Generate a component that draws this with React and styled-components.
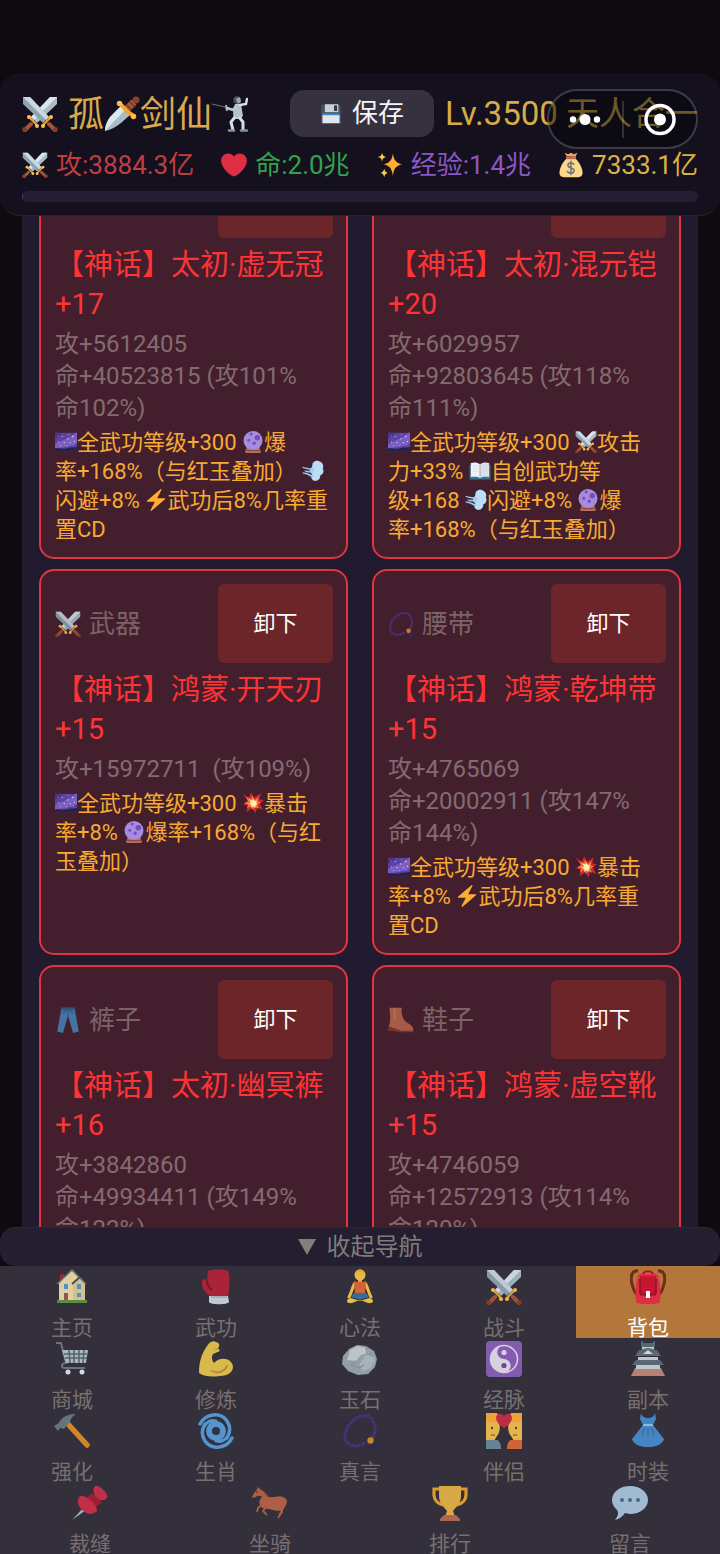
import { useLayoutEffect, useRef } from "react";
import styled, { createGlobalStyle, ThemeProvider } from "styled-components";

const theme = {
  bgColor: "#0d0a10",
  headerColor: "#15101e",
  panelColor: "#201b2f",
  cardColor: "#431f2e",
  mythic: "#ff3334",
  cardBorder: "#e2343f",
  gold: "#d8a94e",
  muted: "#846b70",
  effect: "#f8aa31",
};

const GlobalStyle = createGlobalStyle`
  * {
    box-sizing: border-box;
  }
  body {
    margin: 0;
    background-color: ${(props) => props.theme.bgColor};
    font-family: Roboto, "Noto Sans CJK SC", sans-serif;
    font-weight: 400;
  }
  button {
    font-family: inherit;
    border: none;
    padding: 0;
    cursor: pointer;
  }
`;

/* ---------- icons ---------- */

const Svg = styled.svg`
  width: ${(props) => props.$size || "1em"};
  height: ${(props) => props.$size || "1em"};
  flex: none;
  vertical-align: -0.15em;
`;

const drawings = {
  "⚔": (
    <>
      <path d="M35 1v7L15 27l-6-6L28 1z" fill="#a9bcc8" />
      <path d="M35 1 12 24l-3-3L28 1z" fill="#dbe5ec" />
      <path d="M1 1v7l20 19 6-6L8 1z" fill="#8ea4b2" />
      <path d="M1 1l23 23 3-3L8 1z" fill="#ccd8e0" />
      <path d="M9 28l-6 6M27 28l6 6" stroke="#a2573d" strokeWidth="4" strokeLinecap="round" />
      <path d="M7 21l8 8M29 21l-8 8" stroke="#f3a434" strokeWidth="2.200" strokeLinecap="round" />
      <g fill="#ffc14e">
        <circle cx="7" cy="21" r="2" />
        <circle cx="15" cy="30" r="2" />
        <circle cx="29" cy="21" r="2" />
        <circle cx="21" cy="30" r="2" />
      </g>
      <circle cx="2.600" cy="33.400" r="2.400" fill="#8a3c2b" />
      <circle cx="33.400" cy="33.400" r="2.400" fill="#8a3c2b" />
    </>
  ),
  "🗡": (
    <>
      <path d="M1 35c0-6 3-12 7-16l9-9 9 9-9 8C12 31 6 34 1 35z" fill="#a9bcc8" />
      <path d="M1 35c0-6 3-12 7-16l9-9 4 4z" fill="#dbe7ee" />
      <path d="M22 14l8-8" stroke="#a9573b" strokeWidth="7" />
      <path d="M23 9l5 5M26 6l5 5" stroke="#6f3528" strokeWidth="1.500" />
      <path d="M15 7c3 3 4 3 6 6s6 5 9 7" stroke="#f7a42f" strokeWidth="4" strokeLinecap="round" fill="none" />
      <circle cx="15.500" cy="7.500" r="2.700" fill="#ffbd48" />
      <circle cx="29.500" cy="20.500" r="2.700" fill="#ffbd48" />
      <circle cx="32" cy="4" r="3.500" fill="#8b402d" />
    </>
  ),
  "🤺": (
    <>
      <path d="M0 8l17 4" stroke="#67757f" strokeWidth="1" />
      <path d="M14 9l1 6" stroke="#9aa9b3" strokeWidth="2" />
      <circle cx="25" cy="4" r="3.700" fill="#4b565e" />
      <path d="M24 3l4-2 1 5-3 2z" fill="#99aab5" />
      <path d="M23 8h6l2 12-3 3h-6l-1-6z" fill="#b4c3cd" />
      <path d="M24 10l-3 4-6-2" stroke="#b9c8d2" strokeWidth="2.600" fill="none" strokeLinecap="round" />
      <path d="M28 9l6-1 1-5" stroke="#d5e0e7" strokeWidth="2.400" fill="none" strokeLinecap="round" />
      <path d="M23 21l-4 5 2 8M27 21l4 5v8" stroke="#d6dfe6" strokeWidth="3" fill="none" />
      <path d="M17 34.500h5M29 34.500h6" stroke="#8296a2" strokeWidth="2.500" strokeLinecap="round" />
    </>
  ),
  "💾": (
    <>
      <path d="M3 3h28l3 3v28H2V4z" fill="#47525a" />
      <path d="M8 2h22v13H8z" fill="#c6d2da" />
      <path d="M23 4h5v9h-5z" fill="#2e383e" />
      <path d="M4 17h28v4H4z" fill="#3c87cb" />
      <path d="M4 20h28v13H4z" fill="#e1e8ed" />
    </>
  ),
  "❤": (
    <path
      d="M35.885 11.833c0-5.450-4.418-9.868-9.867-9.868-3.308 0-6.227 1.633-8.018 4.129-1.791-2.496-4.710-4.129-8.017-4.129C4.533 1.965.115 6.382.115 11.833c0 .772.098 1.520.266 2.241C1.751 22.587 11.216 31.568 18 34.034c6.783-2.466 16.249-11.447 17.617-19.959.170-.721.268-1.469.268-2.242z"
      fill="#dd2e44"
    />
  ),
  "✨": (
    <>
      <path d="M22 2c1.500 9 4 13 13 15-9 2-11.500 6-13 16-1.500-10-4-14-13-16 9-2 11.500-6 13-15z" fill="#ffac33" />
      <path d="M7 1c.800 4 2 5.300 6 6-4 .800-5.200 2-6 6-.800-4-2-5.200-6-6 4-.700 5.200-2 6-6zM10 23c.800 4 2 5.300 5 6-3 .800-4.200 2-5 6-.800-4-2-5.200-5-6 3-.700 4.200-2 5-6z" fill="#ffcc4d" />
    </>
  ),
  "💰": (
    <>
      <path d="M12 6L9 1l5 2 4-2 4 2 5-2-3 6z" fill="#f0a65a" />
      <path d="M12 9h12c6 5 10 14 10 20 0 4-3 6-7 6H9c-4 0-7-2-7-6C2 23 6 14 12 9z" fill="#fdd888" />
      <path d="M11 6h14v4H11z" fill="#bf6952" />
      <path d="M22 17c-1-2-7-3-8 0s1 4 4 5 5 2 4 5-7 3-9 0M18 13v18" stroke="#67757f" strokeWidth="2.200" fill="none" strokeLinecap="round" />
    </>
  ),
  "🌌": (
    <>
      <path d="M0 3h36v30H0z" fill="#5b43a4" />
      <path d="M0 22C8 16 20 14 34 3h2v17C24 26 12 27 0 28z" fill="#7a5fc0" />
      <path d="M0 3h12C8 8 5 11 0 13z" fill="#46348a" />
      <path d="M0 29c9-2 14 2 21-1 6-2 10-1 15-2v7H0z" fill="#252346" />
      <g fill="#e5d9ff">
        <circle cx="6" cy="18" r="1" />
        <circle cx="12" cy="9" r="1" />
        <circle cx="15" cy="19" r="1.200" />
        <circle cx="21" cy="13" r="1" />
        <circle cx="25" cy="19" r="1" />
        <circle cx="29" cy="9" r="1.200" />
        <circle cx="32" cy="17" r="1" />
        <circle cx="22" cy="6" r=".8" />
        <circle cx="9" cy="24" r=".8" />
        <circle cx="19" cy="24" r=".8" />
        <circle cx="5" cy="8" r=".8" />
        <circle cx="30" cy="23" r=".8" />
      </g>
    </>
  ),
  "🔮": (
    <>
      <path d="M8 27h20l3 7c0 1-1 2-2 2H7c-1 0-2-1-2-2z" fill="#b8715f" />
      <circle cx="18" cy="15.500" r="15.500" fill="#a78be0" />
      <path d="M7 31h22v2H7z" fill="#8a4b3d" />
      <circle cx="15" cy="5" r="2.500" fill="#7450b4" />
      <circle cx="25" cy="11" r="4.500" fill="#7450b4" />
      <circle cx="20" cy="20" r="2.800" fill="#7450b4" />
      <circle cx="11" cy="15" r="2.500" fill="#7450b4" />
    </>
  ),
  "💨": (
    <>
      <path d="M17 10c-1-7 6-10 11-8 6 2 8 7 6 12 3 5 0 10-4 11 0 7-5 10-10 9-5-2-6-7-3-11-4-1-5-5-3-8z" fill="#bbddf5" />
      <path d="M1 11c7 2 12 2 19 3v4L1 13zM3 17l15 1 1 3-12-1zM1 20c7 1 12 2 18 6l-2 3C11 24 6 23 1 22z" fill="#9dcbee" />
    </>
  ),
  "⚡": (
    <path
      d="M32.938 15.651C32.792 15.260 32.418 15 32 15H19.925L26.890 1.458c.219-.426.106-.947-.271-1.243C26.437.071 26.218 0 26 0c-.233 0-.466.082-.653.243L18 6.588 3.347 19.243c-.316.273-.430.714-.284 1.105S3.582 21 4 21h12.075L9.110 34.542c-.219.426-.106.947.271 1.243.182.144.401.215.619.215.233 0 .466-.082.653-.243L18 29.412l14.653-12.655c.317-.273.430-.714.285-1.106z"
      fill="#ffac33"
    />
  ),
  "📖": (
    <>
      <path d="M1 8h34v24H1z" fill="#3a6f8e" />
      <path d="M3 5c6-2 11-1 15 2v23c-4-3-9-3-15-2z" fill="#f0f3f5" />
      <path d="M33 5c-6-2-11-1-15 2v23c4-3 9-3 15-2z" fill="#dbe2e7" />
      <path d="M18 7v23" stroke="#99aab5" strokeWidth="1.500" />
      <path d="M6 10h9M6 14h9M6 18h9M21 10h9M21 14h9M21 18h9" stroke="#ccd6dd" strokeWidth="1" />
    </>
  ),
  "💥": (
    <>
      <path d="M1 3l10 6 4-8 5 8 11-7-3 10 8 2-7 5 6 11-10-5-3 10-5-9-10 7 3-10-9-3 9-5z" fill="#cf2632" />
      <path d="M7 8l7 4 3-6 3 7 8-5-3 7 6 2-6 4 3 7-7-4-3 6-3-7-7 4 2-6-6-3 6-3z" fill="#f4793a" />
      <path d="M12 12l5 2 2-3 2 4 4-1-2 4 2 2-3 2 0 4-4-3-3 3v-5l-4-2 4-2z" fill="#fff0b6" />
    </>
  ),
  "📿": (
    <>
      <path
        d="M31 24C35 16 33 5 25 3 15 1 3 12 3 23c0 12 14 12 21 6"
        stroke="#553788"
        strokeWidth="3.400"
        strokeDasharray=".1 3.800"
        strokeLinecap="round"
        fill="none"
      />
      <path d="M31 24C35 16 33 5 25 3 15 1 3 12 3 23c0 12 14 12 21 6" stroke="#44307c" strokeWidth="1.600" fill="none" />
      <path d="M30 29l5 1v6h-7z" fill="#2f294d" />
      <circle cx="28.500" cy="27.500" r="3.200" fill="#dc8a2f" />
    </>
  ),
  "👖": (
    <>
      <path d="M9 1h18l6 33-8 2-7-24-7 24-8-2z" fill="#4481b8" />
      <path d="M9 1h18v4H9z" fill="#2d5e88" />
      <path d="M18 4v9M10 8c4 0 5-2 5-4M26 8c-4 0-5-2-5-4" stroke="#2d5e88" strokeWidth="1.400" fill="none" />
    </>
  ),
  "👢": (
    <>
      <path d="M2 1h17c-1 8 1 13 4 18 4 4 12 6 12 12v3H20L1 27c3-8 2-17 1-26z" fill="#b9664b" />
      <path d="M0 28c6 0 12 3 18 5h17v2H17C12 34 7 33 0 33z" fill="#7c3a2c" />
      <path d="M9 2v16" stroke="#c98263" strokeWidth="2" />
    </>
  ),
  "🏠": (
    <>
      <path d="M6 5h4v8H6z" fill="#a32536" />
      <path d="M5 14L18 1l13 13v18H5z" fill="#efdcae" />
      <path d="M19 13l6-6 6 7v18H19z" fill="#e3cc98" />
      <path d="M3 15L18 1l14 14" stroke="#6b776f" strokeWidth="1.600" fill="none" />
      <path d="M18 15l8-7" stroke="#4e5458" strokeWidth="2" />
      <path d="M10 15h4v5h-4zM23 15h4v5h-4zM23 24h4v4h-4z" fill="#519bd6" />
      <path d="M10 24h4v8h-4z" fill="#a65345" />
      <path d="M3 31h30v3H3z" fill="#5f9345" />
    </>
  ),
  "🥊": (
    <>
      <path d="M11 27h19l1 6c-1 3-19 3-20 0z" fill="#ccd6dd" />
      <path d="M10 2c4-2 15-2 20 0 2 3 2 16 0 25H12C6 23 3 17 4 12c1-2 3-2 5-1z" fill="#b32439" />
      <path d="M9 11c0 5 2 8 5 10" stroke="#7c172a" strokeWidth="2" fill="none" />
      <path d="M13 28h16" stroke="#9daeb9" strokeWidth="1.300" />
    </>
  ),
  "🧘": (
    <>
      <path d="M16 9h4v5h-4z" fill="#e5ac38" />
      <circle cx="18" cy="6" r="5.500" fill="#f5c84d" />
      <path d="M13 4c2-5 8-5 10 0-3-1-7-1-10 0z" fill="#fbb030" />
      <path d="M13 14c-3 4-3 9-6 14M23 14c3 4 3 9 6 14" stroke="#f5c84d" strokeWidth="3" fill="none" strokeLinecap="round" />
      <path d="M12 13h12l-1 12H13z" fill="#e2683a" />
      <path d="M12 24h12l3 4-9 3-9-3z" fill="#38729b" />
      <path d="M9 29c-6 1-5 6 1 5l8-3 8 3c6 1 7-4 1-5l-9 3z" fill="#f5c84d" />
    </>
  ),
  "🎒": (
    <>
      <path d="M8 2C2 1 0 7 2 15s4 11 9 11M28 2c6-1 8 5 6 13s-4 11-9 11" stroke="#762a19" strokeWidth="3" fill="none" />
      <path d="M13 6c0-5 10-5 10 0" stroke="#b3122b" strokeWidth="2" fill="none" />
      <path d="M10 5h16c4 2 5 15 4 28-1 3-23 3-24 0C5 20 6 7 10 5z" fill="#dd2e44" />
      <path d="M10 7h16v20H10z" fill="#c41632" />
      <path d="M10 10v14c0 2 16 2 16 0V10" stroke="#8f1128" strokeWidth="1.500" fill="none" />
      <path d="M16 22h4v7h-4z" fill="#fff" />
    </>
  ),
  "🛒": (
    <>
      <path d="M2 2h5l5 20c-4 0-6 4-2 5h21" stroke="#6d7a84" strokeWidth="2" fill="none" />
      <path d="M8 9h26l-2 13H12z" fill="#b4c3cc" />
      <path d="M10 13h23M11 17h22M15 9l1 13M20 9v13M25 9v13M30 9l-1 13" stroke="#59666f" strokeWidth="1.500" />
      <circle cx="14" cy="31" r="2.500" fill="#e1e8ed" />
      <circle cx="28" cy="31" r="2.500" fill="#e1e8ed" />
    </>
  ),
  "💪": (
    <>
      <path d="M9 5c2-4 7-6 9-4 4 1 4 4 2 6l2 3-7 3c-2 3-1 6 1 9 4-5 13-6 17-1 5 6 0 14-11 14-8 1-15 1-21-3C1 20 4 12 9 5z" fill="#e8c54c" />
      <path d="M14 30c6 3 12 1 15-5" stroke="#c58e39" strokeWidth="1.800" fill="none" strokeLinecap="round" />
      <path d="M17 8l3 0" stroke="#d79d3c" strokeWidth="1.500" fill="none" />
    </>
  ),
  "🪨": (
    <>
      <path d="M7 8l8-4 9 1 8 5 3 8-2 8-7 7-10 1-10-4-6-7 1-8z" fill="#9ba9af" />
      <path d="M8 9l8-4 8 2 3 5-8 2-5 6-9-1 2-6z" fill="#c8d1d6" />
      <path d="M23 15l6-2 4 6-4 8-8 3-4-6z" fill="#b2bec4" />
      <path d="M14 20l-5 4 8 3 5-3M24 6l1 6 6 3" stroke="#8f9da6" strokeWidth="1.500" fill="none" />
    </>
  ),
  "☯": (
    <>
      <rect width="36" height="36" rx="4" fill="#8a60bb" />
      <circle cx="18" cy="18" r="13.500" fill="#8a60bb" stroke="#e4dfeb" strokeWidth="1.600" />
      <path d="M18 4.500a13.500 13.500 0 0 0 0 27 6.750 6.750 0 0 0 0-13.500 6.750 6.750 0 0 1 0-13.500z" fill="#e4dfeb" />
      <circle cx="18" cy="11.500" r="2.600" fill="#e4dfeb" />
      <circle cx="18" cy="24.500" r="2.600" fill="#76469e" />
    </>
  ),
  "🏯": (
    <>
      <path d="M5 27h26l4 8H1z" fill="#c18a7c" />
      <path d="M6 23h24v5H6zM8 16h20v5H8zM12 5h12v7H12z" fill="#cad4db" />
      <path d="M11 2h14v4H11zM9 9l9-2 9 2 4 6H5zM6 19h24l4 5H2z" fill="#5d6d78" />
      <path d="M13 13l5-4 5 4z" fill="#dbe3e9" />
      <path d="M12 3V0M24 3V0" stroke="#427fad" strokeWidth="1.500" />
    </>
  ),
  "🔨": (
    <>
      <path d="M14 11L33 32" stroke="#df8c27" strokeWidth="5.500" strokeLinecap="round" />
      <path d="M5 9C10 2 16 1 22 1c-4 3-5 4-6 8l-6 7-3-1c-2 0-2 2-3 3l-4-5 5-3z" fill="#6b7a85" />
    </>
  ),
  "🌀": (
    <g stroke="#579edb" fill="none" strokeLinecap="round">
      <circle cx="18" cy="18" r="7" strokeWidth="6" />
      <path d="M2 11C7 1 22-2 29 8c4 6 3 12 0 17" strokeWidth="3.500" />
      <path d="M34 25C29 35 14 38 7 28c-4-6-3-12 0-17" strokeWidth="3.500" />
      <path d="M7 12c3-4 7-5 11-4M29 24c-3 4-7 5-11 4" strokeWidth="3" />
    </g>
  ),
  "💑": (
    <>
      <path d="M0 1h8c6 3 8 17 3 22l-3 5H0z" fill="#f2c04b" />
      <path d="M36 1h-8c-6 3-8 17-3 22l3 5h8z" fill="#f2c04b" />
      <path d="M0 0h11c2 3 2 7 0 9C7 10 3 10 0 8zM36 0H25c-2 3-2 7 0 9 4 1 8 1 11-1z" fill="#ffac3c" />
      <path d="M0 27h11c3 1 4 5 4 9H0z" fill="#6d8ba0" />
      <path d="M36 27H25c-3 1-4 5-4 9h15z" fill="#df6937" />
      <circle cx="6" cy="15" r="1.200" fill="#66442c" />
      <circle cx="30" cy="15" r="1.200" fill="#66442c" />
      <path d="M5 22h4M31 22h-4" stroke="#b66a35" strokeWidth="1.500" />
      <path d="M18 15C6 8 10-1 15 1c1 0 2 1 3 2 1-1 2-2 3-2 5-2 9 7-3 14z" fill="#c92e47" />
    </>
  ),
  "👗": (
    <>
      <path d="M11 0c1 4 4 5 7 5s6-1 7-5l1 6-3 6 11 14c-3 11-29 11-32 0l11-14-3-6z" fill="#468dce" />
      <path d="M13 12h10" stroke="#93c8ed" strokeWidth="2" />
      <path d="M15 15l-3 7M21 15l3 7M18 15v8" stroke="#2c69a0" strokeWidth="1" />
    </>
  ),
  "📌": (
    <>
      <path d="M14 20L0 35l17-12z" fill="#a9b9c4" />
      <path d="M20 8l10 9-9 8-10-9z" fill="#a91b35" />
      <path d="M23 1c3-2 15 8 12 12-3 3-7 3-10 0s-5-8-2-12zM8 11c5-2 18 9 17 15-5 5-11 3-15-1S4 15 8 11z" fill="#d02e49" />
    </>
  ),
  "🐎": (
    <>
      <path d="M10 11C7 11 5 10 4 12l-4 1c0-3 2-5 4-7l2-4 3 3c3 1 5 5 8 7 5 1 10-2 14 0 5 2 4 5 3 8l-3 5-6 1-8-2-7-1-3-6z" fill="#b76247" />
      <path d="M10 19l-4 4-1 4M15 21l-4 5 4 4M27 22l3 5-4 6M31 20l-1 6-3 4" stroke="#b76247" strokeWidth="1.800" fill="none" />
      <path d="M8 4c4 1 6 5 8 7" stroke="#7a4032" strokeWidth="1.200" fill="none" />
      <circle cx="5" cy="7" r=".8" fill="#41231e" />
    </>
  ),
  "🏆": (
    <>
      <path d="M8 4H2v6c0 5 4 9 9 10M28 4h6v6c0 5-4 9-9 10" stroke="#eba52f" strokeWidth="3.200" fill="none" />
      <path d="M7 1h22v10c0 8-5 11-8 15l2 6H13l2-6C12 22 7 19 7 11z" fill="#e8b446" />
      <path d="M12 30h12l4 4v2H8v-2z" fill="#b66c54" />
    </>
  ),
  "💬": (
    <>
      <path d="M18 1c10 0 18 6 18 14s-8 14-18 14l-5-1c-3 4-6 6-10 7 3-4 4-7 2-10-3-3-5-6-5-10C0 7 8 1 18 1z" fill="#a9c6de" />
      <g fill="#416d93">
        <circle cx="10" cy="15" r="2" />
        <circle cx="18" cy="15" r="2" />
        <circle cx="26" cy="15" r="2" />
      </g>
    </>
  ),
};

const emojiPattern = new RegExp(`(${Object.keys(drawings).join("|")})`, "u");

function Emoji({ name, size }) {
  return (
    <Svg viewBox="0 0 36 36" fill="none" $size={size} role="img" aria-label={name}>
      {drawings[name]}
    </Svg>
  );
}

// Swaps the emoji inside a string for our own drawings
function RichText({ children }) {
  return children
    .split(emojiPattern)
    .map((part, i) => (drawings[part] ? <Emoji key={i} name={part} /> : part));
}

/* ---------- header ---------- */

const Page = styled.div`
  height: 100vh;
  display: flex;
  flex-direction: column;
  padding-top: 73px;
`;

const SHeader = styled.header`
  position: relative;
  flex: none;
  background-color: ${(props) => props.theme.headerColor};
  border-bottom: 1px solid #2c2326;
  border-radius: 20px;
  padding: 17px 22px 13px;
`;

const TitleRow = styled.div`
  display: flex;
  align-items: center;
  gap: 11px;
  white-space: nowrap;
`;

const Name = styled.h1`
  flex: 1;
  margin: 0;
  padding-top: 4px;
  color: ${(props) => props.theme.gold};
  font-size: 36px;
  line-height: 43px;
  font-weight: 400;
  svg:first-child {
    margin-right: 10px;
  }
`;

const SaveButton = styled.button`
  display: flex;
  align-items: center;
  justify-content: center;
  gap: 10px;
  width: 144px;
  height: 47px;
  border-radius: 14px;
  background-color: #35313e;
  color: #f5f4f6;
  font-size: 26px;
  line-height: 47px;
`;

const Level = styled.span`
  color: #d5ac45;
  font-size: 33px;
  line-height: 47px;
`;

const Stats = styled.div`
  display: flex;
  justify-content: space-between;
  margin: 13px 0 11px;
  white-space: nowrap;
`;

const Stat = styled.span`
  display: flex;
  align-items: center;
  gap: 8px;
  color: ${(props) => props.$color};
  font-size: 26px;
  line-height: 30px;
`;

const ExpBar = styled.div`
  height: 11px;
  border-radius: 6px;
  overflow: hidden;
  background-color: #241f33;
`;

const ExpFill = styled.div`
  height: 100%;
  background-color: #4a386c;
`;

const Capsule = styled.div`
  position: absolute;
  top: 16px;
  right: 22px;
  display: flex;
  align-items: center;
  width: 151px;
  height: 60px;
  border: 2px solid rgba(255, 255, 255, 0.2);
  border-radius: 30px;
  background-color: rgba(4, 4, 8, 0.5);
`;

const CapsuleButton = styled.button`
  flex: 1;
  display: flex;
  justify-content: center;
  background: none;
  & + & {
    border-left: 2px solid rgba(255, 255, 255, 0.16);
  }
`;

function Header() {
  return (
    <SHeader>
      <TitleRow>
        <Name>
          <RichText>⚔孤🗡剑仙🤺</RichText>
        </Name>
        <SaveButton>
          <Emoji name="💾" size="22px" />
          保存
        </SaveButton>
        <Level>Lv.3500 天人合一</Level>
      </TitleRow>
      <Stats>
        <Stat $color="#c33c42">
          <Emoji name="⚔" />
          攻:3884.3亿
        </Stat>
        <Stat $color="#2fa44d">
          <Emoji name="❤" />
          命:2.0兆
        </Stat>
        <Stat $color="#8b57c6">
          <Emoji name="✨" />
          经验:1.4兆
        </Stat>
        <Stat $color="#dbb143">
          <Emoji name="💰" />
          7333.1亿
        </Stat>
      </Stats>
      <ExpBar role="progressbar" aria-valuenow={0}>
        <ExpFill style={{ width: "0.2%" }} />
      </ExpBar>
      <Capsule>
        <CapsuleButton aria-label="更多">
          <svg width="34" height="37" viewBox="0 0 34 37" fill="#fff">
            <circle cx="5" cy="18.500" r="3.200" />
            <circle cx="17" cy="18.500" r="5.500" />
            <circle cx="29" cy="18.500" r="3.200" />
          </svg>
        </CapsuleButton>
        <CapsuleButton aria-label="关闭">
          <svg width="34" height="37" viewBox="0 0 34 37" fill="none">
            <circle cx="17" cy="18.500" r="14" stroke="#fff" strokeWidth="3.500" />
            <circle cx="17" cy="18.500" r="6" fill="#fff" />
          </svg>
        </CapsuleButton>
      </Capsule>
    </SHeader>
  );
}

/* ---------- equipment ---------- */

const Scroller = styled.main`
  flex: 1;
  min-height: 0;
  overflow-y: auto;
  scrollbar-width: none;
  padding: 0 22px;
`;

const Panel = styled.section`
  display: grid;
  grid-template-columns: 1fr 1fr;
  gap: 10px 24px;
  padding: 10px 17px 17px;
  background-color: ${(props) => props.theme.panelColor};
`;

const Card = styled.article`
  min-width: 0;
  border: 2px solid ${(props) => props.theme.cardBorder};
  border-radius: 15px;
  padding: 13px 13px 13px 14px;
  background-color: ${(props) => props.theme.cardColor};
  white-space: pre;
`;

const CardTop = styled.div`
  display: flex;
  align-items: center;
  justify-content: space-between;
  margin-bottom: 8px;
`;

const Slot = styled.span`
  display: flex;
  align-items: center;
  gap: 8px;
  color: #7c6367;
  font-size: 26px;
  line-height: 32px;
  svg {
    opacity: 0.85;
  }
`;

const RemoveButton = styled.button`
  width: 115px;
  height: 79px;
  border-radius: 6px;
  background-color: #6c262a;
  color: white;
  font-size: 22px;
  line-height: 79px;
`;

const ItemName = styled.h2`
  margin: 0;
  color: ${(props) => props.theme.mythic};
  font-size: 29px;
  line-height: 39px;
  font-weight: 400;
`;

const ItemStats = styled.div`
  margin: 4px 0;
  color: ${(props) => props.theme.muted};
  font-size: 24px;
  line-height: 32px;
`;

const Effects = styled.div`
  color: ${(props) => props.theme.effect};
  font-size: 22px;
  line-height: 29px;
`;

const items = [
  {
    slot: "",
    name: "太初·虚无冠",
    level: 17,
    stats: ["攻+5612405", "命+40523815 (攻101%", "命102%)"],
    effects: ["🌌全武功等级+300 🔮爆", "率+168%（与红玉叠加） 💨", "闪避+8% ⚡武功后8%几率重", "置CD"],
  },
  {
    slot: "",
    name: "太初·混元铠",
    level: 20,
    stats: ["攻+6029957", "命+92803645 (攻118%", "命111%)"],
    effects: ["🌌全武功等级+300 ⚔攻击", "力+33% 📖自创武功等", "级+168 💨闪避+8% 🔮爆", "率+168%（与红玉叠加）"],
  },
  {
    icon: "⚔",
    slot: "武器",
    name: "鸿蒙·开天刃",
    level: 15,
    stats: ["攻+15972711  (攻109%)"],
    effects: ["🌌全武功等级+300 💥暴击", "率+8% 🔮爆率+168%（与红", "玉叠加）"],
  },
  {
    icon: "📿",
    slot: "腰带",
    name: "鸿蒙·乾坤带",
    level: 15,
    stats: ["攻+4765069", "命+20002911 (攻147%", "命144%)"],
    effects: ["🌌全武功等级+300 💥暴击", "率+8% ⚡武功后8%几率重", "置CD"],
  },
  {
    icon: "👖",
    slot: "裤子",
    name: "太初·幽冥裤",
    level: 16,
    stats: ["攻+3842860", "命+49934411 (攻149%", "命122%)"],
    effects: [],
  },
  {
    icon: "👢",
    slot: "鞋子",
    name: "鸿蒙·虚空靴",
    level: 15,
    stats: ["攻+4746059", "命+12572913 (攻114%", "命120%)"],
    effects: [],
  },
];

function Item({ item }) {
  return (
    <Card>
      <CardTop>
        <Slot>
          {item.icon && <Emoji name={item.icon} />}
          {item.slot}
        </Slot>
        <RemoveButton>卸下</RemoveButton>
      </CardTop>
      <ItemName>
        【神话】{item.name}
        <br />+{item.level}
      </ItemName>
      <ItemStats>
        {item.stats.map((line) => (
          <div key={line}>{line}</div>
        ))}
      </ItemStats>
      <Effects>
        {item.effects.map((line) => (
          <div key={line}>
            <RichText>{line}</RichText>
          </div>
        ))}
      </Effects>
    </Card>
  );
}

function Equipment() {
  const scroller = useRef(null);
  useLayoutEffect(() => {
    scroller.current.scrollTop = 82;
  }, []);
  return (
    <Scroller ref={scroller}>
      <Panel>
        {items.map((item) => (
          <Item key={item.name} item={item} />
        ))}
      </Panel>
    </Scroller>
  );
}

/* ---------- navigation ---------- */

const Collapse = styled.button`
  flex: none;
  display: flex;
  align-items: center;
  justify-content: center;
  gap: 11px;
  height: 39px;
  border-top: 1px solid #30272b;
  border-radius: 15px;
  background-color: #231e30;
  color: #817b7e;
  font-size: 24px;
  line-height: 38px;
`;

const Nav = styled.nav`
  flex: none;
  display: flex;
  flex-wrap: wrap;
  background-color: #332f3b;
`;

const NavButton = styled.button`
  flex: 1 0 20%;
  display: flex;
  flex-direction: column;
  align-items: center;
  gap: 14px;
  padding-top: 3px;
  background-color: ${(props) => (props.$active ? "#b3773b" : "transparent")};
  color: ${(props) => (props.$active ? "white" : "#78706f")};
  font-size: 21px;
  line-height: 19px;
  svg {
    opacity: ${(props) => (props.$active ? 1 : 0.92)};
  }
`;

const tabs = [
  ["🏠", "主页"],
  ["🥊", "武功"],
  ["🧘", "心法"],
  ["⚔", "战斗"],
  ["🎒", "背包"],
  ["🛒", "商城"],
  ["💪", "修炼"],
  ["🪨", "玉石"],
  ["☯", "经脉"],
  ["🏯", "副本"],
  ["🔨", "强化"],
  ["🌀", "生肖"],
  ["📿", "真言"],
  ["💑", "伴侣"],
  ["👗", "时装"],
  ["📌", "裁缝"],
  ["🐎", "坐骑"],
  ["🏆", "排行"],
  ["💬", "留言"],
];

function Navigation() {
  return (
    <>
      <Collapse>
        <svg width="18" height="16" viewBox="0 0 18 16" fill="#857d78">
          <path d="M0 0h18L9 16z" />
        </svg>
        收起导航
      </Collapse>
      <Nav>
        {tabs.map(([icon, label]) => (
          <NavButton key={label} $active={label === "背包"}>
            <Emoji name={icon} size="36px" />
            {label}
          </NavButton>
        ))}
      </Nav>
    </>
  );
}

function App() {
  return (
    <ThemeProvider theme={theme}>
      <GlobalStyle />
      <Page>
        <Header />
        <Equipment />
        <Navigation />
      </Page>
    </ThemeProvider>
  );
}

export default App;
